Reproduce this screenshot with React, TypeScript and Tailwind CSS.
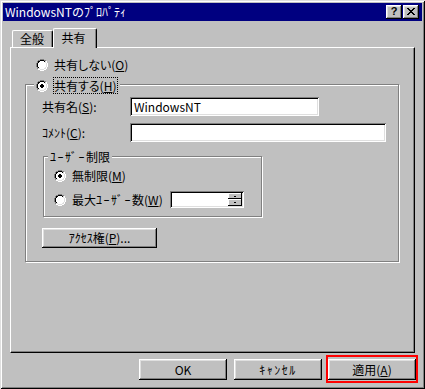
import React from "react";

const RADIO = [
  "....oooo....",
  "..ooiiiioo..",
  ".oiiffffiio.",
  ".oiffffffio.",
  "oiffffffffio",
  "oiffffffffio",
  "oiffffffffio",
  "oiffffffffio",
  ".oiffffffio.",
  ".oiiffffiio.",
  "..ooiiiioo..",
  "....oooo....",
];

function Radio({ checked = false }: { checked?: boolean }) {
  const rects: React.ReactElement[] = [];
  RADIO.forEach((row, r) => {
    row.split("").forEach((ch, c) => {
      if (ch === ".") return;
      const tl = r + c <= 10;
      let fill = "#ffffff";
      if (ch === "o") fill = tl ? "#808080" : "#ffffff";
      else if (ch === "i") fill = tl ? "#000000" : "#dfdfdf";
      if (checked && ch === "f") {
        const inDot =
          r >= 4 && r <= 7 && c >= 4 && c <= 7 && !((r === 4 || r === 7) && (c === 4 || c === 7));
        if (inDot) fill = "#000000";
      }
      rects.push(<rect key={`${r}-${c}`} x={c} y={r} width={1} height={1} fill={fill} />);
    });
  });
  return (
    <svg width={12} height={12} viewBox="0 0 12 12" shapeRendering="crispEdges" className="block shrink-0">
      {rects}
    </svg>
  );
}

function Pix({ map, color = "#000" }: { map: string[]; color?: string }) {
  const w = map[0].length;
  const h = map.length;
  const rects: React.ReactElement[] = [];
  map.forEach((row, r) =>
    row.split("").forEach((ch, c) => {
      if (ch !== ".") rects.push(<rect key={`${r}-${c}`} x={c} y={r} width={1} height={1} fill={color} />);
    })
  );
  return (
    <svg width={w} height={h} viewBox={`0 0 ${w} ${h}`} shapeRendering="crispEdges" className="block shrink-0">
      {rects}
    </svg>
  );
}

const CLOSE = ["kk....kk", ".kk..kk.", "..kkkk..", "...kk...", "..kkkk..", ".kk..kk.", "kk....kk"];

function M({ children }: { children: React.ReactNode }) {
  return <span className="underline decoration-1 underline-offset-1">{children}</span>;
}

function W({ children }: { children: React.ReactNode }) {
  return <span className="tracking-[1.5px]">{children}</span>;
}

export default function App() {
  return (
    <div className="w-[425px] h-[389px] bg-[#c0c0c0] p-[3px] flex flex-col overflow-hidden text-black text-[12px] leading-[14px] font-['Noto_Sans_CJK_JP',sans-serif] shadow-[inset_1px_1px_0_#dfdfdf,inset_-1px_-1px_0_#000,inset_2px_2px_0_#fff,inset_-2px_-2px_0_#808080]">
      {/* title bar */}
      <div className="h-[18px] bg-[#000080] flex items-center pl-[2px] pr-[3px] shrink-0">
        <span className="text-white whitespace-nowrap">WindowsNTのﾌﾟﾛﾊﾟﾃｨ</span>
        <div className="flex-1" />
        <div className="w-[16px] h-[14px] bg-[#c0c0c0] flex items-center justify-center font-bold text-[11px] leading-none font-['Liberation_Sans',sans-serif] shadow-[inset_-1px_-1px_0_#000,inset_1px_1px_0_#fff,inset_-2px_-2px_0_#808080,inset_2px_2px_0_#dfdfdf] pb-[1px]">
          ?
        </div>
        <div className="ml-[1px] w-[16px] h-[14px] bg-[#c0c0c0] flex items-center justify-center shadow-[inset_-1px_-1px_0_#000,inset_1px_1px_0_#fff,inset_-2px_-2px_0_#808080,inset_2px_2px_0_#dfdfdf] pb-[1px]">
          <Pix map={CLOSE} />
        </div>
      </div>

      {/* tabs + panel */}
      <div className="mt-[7px] mx-[7px] flex flex-col">
        <div className="h-[19px] flex items-end pl-[2px]">
          <div className="w-[41px] h-[17px] border-l border-t border-r border-l-white border-t-white border-r-black rounded-t-[2px] shadow-[inset_-1px_0_0_#808080] flex items-center justify-center pr-[1px]">
            全般
          </div>
          <div className="relative z-10 -mb-[1px] w-[44px] h-[20px] bg-[#c0c0c0] border-l border-t border-r border-l-white border-t-white border-r-black rounded-t-[2px] shadow-[inset_-1px_0_0_#808080] flex items-center justify-center pr-[3px] pb-[1px]">
            共有
          </div>
        </div>

        <div className="h-[306px] border border-t-white border-l-white border-r-black border-b-black shadow-[inset_-1px_-1px_0_#808080] flex flex-col">
          {/* radio: not shared */}
          <div className="mt-[8px] h-[17px] pl-[25px] flex items-center">
            <Radio />
            <span className="ml-[6px] whitespace-nowrap [font-feature-settings:'palt']">
              共有しない(<M>O</M>)
            </span>
          </div>

          {/* group: shared */}
          <div className="mt-[11px] ml-[14px] w-[374px] h-[178px] border border-[#808080] shadow-[inset_1px_1px_0_#fff,1px_1px_0_#fff] flex flex-col">
            <div className="-mt-[8px] ml-[8px] self-start h-[17px] bg-[#c0c0c0] px-[2px] flex items-center">
              <Radio checked />
              <span className="ml-[5px] h-[17px] border border-dotted border-black pr-[1px] flex items-center whitespace-nowrap [font-feature-settings:'palt']">
                共有する(<M>H</M>)
              </span>
            </div>

            <div className="mt-[3px] h-[19px] pl-[16px] flex items-center">
              <span className="w-[88px] whitespace-nowrap">
                共有名(<M>S</M>):
              </span>
              <div className="w-[189px] h-[19px] bg-white pl-[4px] flex items-center shadow-[inset_1px_1px_0_#808080,inset_-1px_-1px_0_#fff,inset_2px_2px_0_#000,inset_-2px_-2px_0_#dfdfdf]">
                WindowsNT
              </div>
            </div>

            <div className="mt-[7px] h-[19px] pl-[16px] flex items-center">
              <span className="w-[88px] whitespace-nowrap">
                ｺﾒﾝﾄ(<M>C</M>):
              </span>
              <div className="w-[256px] h-[19px] bg-white shadow-[inset_1px_1px_0_#808080,inset_-1px_-1px_0_#fff,inset_2px_2px_0_#000,inset_-2px_-2px_0_#dfdfdf]" />
            </div>

            {/* group: user limit */}
            <div className="mt-[14px] ml-[17px] w-[219px] h-[61px] border border-[#808080] shadow-[inset_1px_1px_0_#fff,1px_1px_0_#fff] flex flex-col">
              <div className="-mt-[7px] ml-[4px] self-start h-[14px] bg-[#c0c0c0] px-[2px] flex items-center whitespace-nowrap">
                <W>ﾕｰｻﾞｰ</W>制限
              </div>
              <div className="mt-[3px] h-[17px] pl-[10px] flex items-center">
                <Radio checked />
                <span className="ml-[6px] whitespace-nowrap">
                  無制限(<M>M</M>)
                </span>
              </div>
              <div className="mt-[7px] h-[17px] pl-[10px] flex items-center">
                <Radio />
                <span className="ml-[6px] w-[98px] whitespace-nowrap">
                  最大<W>ﾕｰｻﾞｰ</W>数(<M>W</M>)
                </span>
                <div className="w-[74px] h-[17px] bg-white p-[2px] flex justify-end shadow-[inset_1px_1px_0_#808080,inset_-1px_-1px_0_#fff,inset_2px_2px_0_#000,inset_-2px_-2px_0_#dfdfdf]">
                  <div className="w-[14px] flex flex-col">
                    <div className="h-[6px] bg-[#c0c0c0] flex items-center justify-center shadow-[inset_-1px_-1px_0_#000,inset_1px_1px_0_#fff]">
                      <div className="w-[2px] h-[1px] bg-black" />
                    </div>
                    <div className="h-[7px] bg-[#c0c0c0] flex items-center justify-center shadow-[inset_-1px_-1px_0_#000,inset_1px_1px_0_#fff]">
                      <div className="w-[2px] h-[1px] bg-black" />
                    </div>
                  </div>
                </div>
              </div>
            </div>

            <div className="mt-[11px] ml-[16px] w-[115px] h-[20px] flex items-center justify-center whitespace-nowrap shadow-[inset_-1px_-1px_0_#000,inset_1px_1px_0_#fff,inset_-2px_-2px_0_#808080,inset_2px_2px_0_#dfdfdf]">
              ｱｸｾｽ権(<M>P</M>)...
            </div>
          </div>
        </div>
      </div>

      {/* bottom buttons */}
      <div className="mt-[6px] pr-[6px] flex justify-end">
        <div className="w-[88px] h-[21px] flex items-center justify-center shadow-[inset_-1px_-1px_0_#000,inset_1px_1px_0_#fff,inset_-2px_-2px_0_#808080,inset_2px_2px_0_#dfdfdf]">
          OK
        </div>
        <div className="ml-[7px] w-[88px] h-[21px] flex items-center justify-center shadow-[inset_-1px_-1px_0_#000,inset_1px_1px_0_#fff,inset_-2px_-2px_0_#808080,inset_2px_2px_0_#dfdfdf]">
          <W>ｷｬﾝｾﾙ</W>
        </div>
        <div className="relative ml-[6px] w-[88px] h-[21px] flex items-center justify-center shadow-[inset_-1px_-1px_0_#000,inset_1px_1px_0_#fff,inset_-2px_-2px_0_#808080,inset_2px_2px_0_#dfdfdf]">
          適用(<M>A</M>)
          <div className="absolute -left-[2px] -top-[4px] -right-[2px] -bottom-[3px] border-2 border-[#ff0000] pointer-events-none" />
        </div>
      </div>
    </div>
  );
}
